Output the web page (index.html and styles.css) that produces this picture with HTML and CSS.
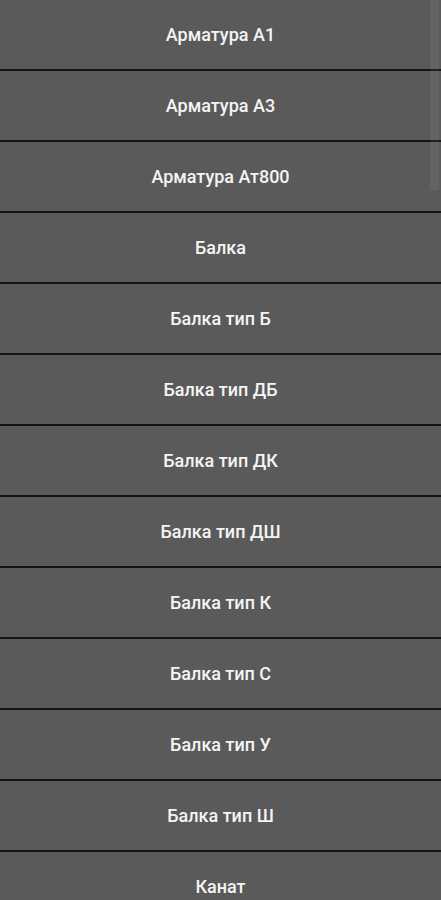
FILE: index.html
```html
<!DOCTYPE html>
<html lang="ru">
<head>
    <meta charset="UTF-8">
    <meta name="viewport" content="width=device-width, initial-scale=1.0">
    <title>Каталог</title>
    <link rel="stylesheet" href="styles.css">
</head>
<body>
    <div class="list">
        <div class="item">Арматура А1</div>
        <div class="item">Арматура А3</div>
        <div class="item">Арматура Ат800</div>
        <div class="item">Балка</div>
        <div class="item">Балка тип Б</div>
        <div class="item">Балка тип ДБ</div>
        <div class="item">Балка тип ДК</div>
        <div class="item">Балка тип ДШ</div>
        <div class="item">Балка тип К</div>
        <div class="item">Балка тип С</div>
        <div class="item">Балка тип У</div>
        <div class="item">Балка тип Ш</div>
        <div class="item">Канат</div>
    </div>
    <div class="scrollbar"></div>
</body>
</html>
```

FILE: styles.css
```css
body { margin: 0; background-color: #5a5a5a; font-family: Roboto, "Noto Sans", sans-serif; overflow: hidden; }
.list { display: flex; flex-direction: column; }
.item { height: 69px; display: flex; align-items: center; justify-content: center; color: #f4f4f4; font-size: 18px; font-weight: 500; border-bottom: 2px solid #141414; background-color: #5a5a5a; }
.scrollbar { position: absolute; top: 0; right: 2px; width: 9px; height: 190px; background-color: rgba(255, 255, 255, 0.06); }
```
